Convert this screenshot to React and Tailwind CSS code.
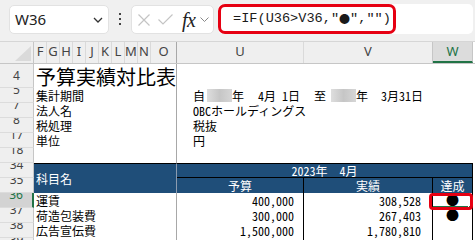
import React from "react";

const jp = "font-['Noto_Sans_CJK_JP','Noto_Sans_CJK_SC',sans-serif] [font-feature-settings:'hwid']";
const ui = "font-['Noto_Sans','Liberation_Sans',sans-serif]";

function RowHead({ n, h = "h-[15px]", selected = false, pb = "pb-[6px]" }) {
  return (
    <div
      className={`${h} w-[34px] shrink-0 flex items-end justify-center overflow-hidden border-b border-b-[#dcdcdc] ${ui} text-[12px] leading-[12px] ${pb} ${
        selected
          ? "bg-[#d3d3d3] text-[#217346] border-r-2 border-r-[#217346]"
          : "bg-[#efefef] text-[#444] border-r border-r-[#c6c6c6]"
      }`}
    >
      {n}
    </div>
  );
}

function Blur() {
  return <span className="inline-block w-[25px] h-[13px] bg-gradient-to-r from-[#dedede] via-[#c6c6c6] to-[#d6d6d6] blur-[0.6px]" />;
}

function Period() {
  return (
    <span className="flex items-center">
      <span>自</span>
      <span className="ml-[2px] flex"><Blur /></span>
      <span>年</span>
      <span className="ml-[14px]">4月 1日</span>
      <span className="ml-[14px]">至</span>
      <span className="ml-[5px] flex"><Blur /></span>
      <span>年</span>
      <span className="ml-[13px]">3月31日</span>
    </span>
  );
}

const infoRows = [
  { n: "5", label: "集計期間", value: <Period /> },
  { n: "7", label: "法人名", value: "OBCホールディングス" },
  { n: "8", label: "税処理", value: "税抜" },
  { n: "17", label: "単位", value: "円" },
  { n: "18", label: "", value: "" },
];

const dataRows = [
  { n: "36", name: "運賃", budget: "400,000", actual: "308,528", mark: "●", selected: true },
  { n: "37", name: "荷造包装費", budget: "300,000", actual: "267,403", mark: "●" },
  { n: "38", name: "広告宣伝費", budget: "1,500,000", actual: "1,780,810", mark: "" },
];

function TopBar() {
  return (
    <div className="h-[42px] bg-[#f0f0f0] border-b border-[#d6d6d6] flex items-start pt-[4px] pl-[9px] pr-[2px]">
      {/* name box */}
      <div className="mt-[1px] w-[100px] h-[29px] bg-white rounded-[5px] border border-[#e2e2e2] flex items-center justify-between pl-[5px] pr-[5px]">
        <span className={`${ui} text-[15px] text-[#222]`}>W36</span>
        <svg viewBox="0 0 10 6" className="w-[10px] h-[6px]" fill="none" stroke="#333" strokeWidth="1.3">
          <path d="M1 1l4 4 4-4" />
        </svg>
      </div>
      <div className="w-[22px] h-[30px] flex flex-col items-center justify-center gap-[3px]">
        <span className="w-[2px] h-[2px] bg-[#444]" />
        <span className="w-[2px] h-[2px] bg-[#444]" />
        <span className="w-[2px] h-[2px] bg-[#444]" />
      </div>
      {/* formula buttons */}
      <div className="mt-[1px] w-[83px] h-[29px] bg-white rounded-[5px] border border-[#e2e2e2] flex items-center pl-[6px]">
        <svg viewBox="0 0 12 12" className="w-[12px] h-[12px]" fill="none" stroke="#c4c4c4" strokeWidth="1.2">
          <path d="M0.5 0.5l11 11M11.5 0.5l-11 11" />
        </svg>
        <svg viewBox="0 0 15 11" className="ml-[8px] w-[15px] h-[11px]" fill="none" stroke="#c4c4c4" strokeWidth="1.2">
          <path d="M0.5 5.5l4.5 4.5 9.5-9.5" />
        </svg>
        <span className="ml-[9px] font-['Liberation_Serif',serif] italic text-[20px] leading-[20px] text-[#222] tracking-[-0.5px]">fx</span>
        <svg viewBox="0 0 9 5" className="ml-[5px] w-[9px] h-[5px]" fill="none" stroke="#888" strokeWidth="1">
          <path d="M0.5 0.5l4 4 4-4" />
        </svg>
      </div>
      {/* formula input */}
      <div className="ml-[4px] flex-1 h-[30px] bg-white rounded-[5px] relative flex items-center pl-[15px]">
        <div className="absolute left-0 top-0 w-[178px] h-[30px] border-[3px] border-[#e60012] rounded-[7px]" />
        <span className="font-['Liberation_Mono',monospace] text-[13.6px] text-[#1a1a1a] flex items-center whitespace-pre">
          =IF(U36&gt;V36,"
          <span className="inline-block w-[11px] text-center font-['Noto_Sans_CJK_JP',sans-serif] text-[11px] leading-[11px]">●</span>
          ","")
        </span>
      </div>
    </div>
  );
}

function ColumnHeader() {
  const narrow = ["F", "G", "H", "I", "J", "K", "L", "M", "N"];
  const cell = `h-full flex justify-center pt-[2px] ${ui} text-[13px] leading-[15px] text-[#444]`;
  return (
    <div className="h-[22px] flex bg-[#efefef] border-b border-[#c6c6c6]">
      <div className="w-[34px] h-full shrink-0 border-r border-[#c6c6c6] relative">
        <svg viewBox="0 0 16 15" className="absolute right-[2px] bottom-[2px] w-[16px] h-[15px]">
          <path d="M16 0V15H0Z" fill="#dadada" />
        </svg>
      </div>
      {narrow.map((c) => (
        <div key={c} className={`${cell} w-[13px] shrink-0 border-r border-[#dadada]`}>{c}</div>
      ))}
      <div className={`${cell} w-[26px] shrink-0 border-r border-[#a8a8a8]`}>O</div>
      <div className={`${cell} w-[127px] shrink-0 border-r border-[#dadada]`}>U</div>
      <div className={`${cell} w-[129px] shrink-0 border-r border-[#c6c6c6]`}>V</div>
      <div className={`h-full w-[40px] shrink-0 flex justify-center pt-[2px] ${ui} text-[13px] leading-[15px] text-[#217346] bg-[#dcdcdc] border-b-2 border-[#217346] border-r border-r-[#c6c6c6]`}>W</div>
      <div className="flex-1 bg-white" />
    </div>
  );
}

export default function App() {
  return (
    <div className="w-[475px] h-[240px] overflow-hidden bg-white relative text-black">
      <TopBar />
      <ColumnHeader />

      {/* row 4: title */}
      <div className="flex h-[24px]">
        <RowHead n="4" h="h-[24px]" pb="pb-[5px]" />
        <div className={`w-[143px] shrink-0 border-r border-[#a8a8a8] flex items-end pl-[2px] ${jp} text-[20px] leading-[22px]`}>
          予算実績対比表
        </div>
        <div className="flex-1" />
      </div>

      {infoRows.map((r) => (
        <div key={r.n} className={`flex h-[15px] ${jp} text-[12px] leading-[15px]`}>
          <RowHead n={r.n} />
          <div className="w-[143px] shrink-0 border-r border-[#a8a8a8] pl-[2px] whitespace-nowrap">{r.label}</div>
          <div className="flex-1 pl-[16px] whitespace-nowrap flex items-center">{r.value}</div>
        </div>
      ))}

      {/* rows 34-35: table header */}
      <div className={`flex h-[30px] ${jp} text-[12px] leading-[14px] text-white`}>
        <div className="flex flex-col">
          <RowHead n="34" />
          <RowHead n="35" />
        </div>
        <div className="w-[143px] shrink-0 bg-[#1f4e79] border-t border-black border-r border-r-[#8c9cb0] flex items-center pl-[2px] pt-[1px]">
          科目名
        </div>
        <div className="w-[296px] shrink-0 bg-[#1f4e79] border-t border-black border-r border-r-black flex flex-col">
          <div className="h-[14px] border-b border-black flex items-center justify-center">
            <span>2023年</span>
            <span className="ml-[12px]">4月</span>
          </div>
          <div className="flex-1 flex">
            <div className="w-[127px] border-r border-black flex items-center justify-center">予算</div>
            <div className="w-[129px] border-r border-black flex items-center justify-center">実績</div>
            <div className="flex-1 flex items-center justify-center">達成</div>
          </div>
        </div>
        <div className="flex-1" />
      </div>

      {/* data rows */}
      {dataRows.map((r) => (
        <div key={r.n} className={`flex h-[15px] ${jp} text-[12px] leading-[15px]`}>
          <RowHead n={r.n} selected={r.selected} />
          <div className="w-[143px] shrink-0 border-r border-[#a8a8a8] pl-[2px] whitespace-nowrap">{r.name}</div>
          <div className="w-[127px] shrink-0 border-r border-black text-right pr-[9px]">{r.budget}</div>
          <div className="w-[129px] shrink-0 border-r border-black text-right pr-[11px]">{r.actual}</div>
          <div className="w-[40px] shrink-0 border-r border-black text-center relative text-[13px] leading-[14px]">
            {r.mark}
            {r.selected && (
              <>
                <span className="absolute left-0 right-[3px] bottom-0 h-[2px] bg-[#217346]" />
                <span className="absolute right-0 bottom-[-1px] w-[4px] h-[4px] bg-[#217346] border border-white" />
              </>
            )}
          </div>
          <div className="flex-1" />
        </div>
      ))}
      <div className="flex h-[15px]">
        <RowHead n="39" />
        <div className="w-[143px] shrink-0 border-r border-[#a8a8a8]" />
        <div className="w-[127px] shrink-0 border-r border-black" />
        <div className="w-[129px] shrink-0 border-r border-black" />
        <div className="w-[40px] shrink-0 border-r border-black" />
      </div>

      {/* annotation around the selected cell */}
      <div className="absolute left-[429px] top-[193px] w-[44px] h-[17px] border-[3px] border-[#e60012] rounded-[4px]" />
    </div>
  );
}
